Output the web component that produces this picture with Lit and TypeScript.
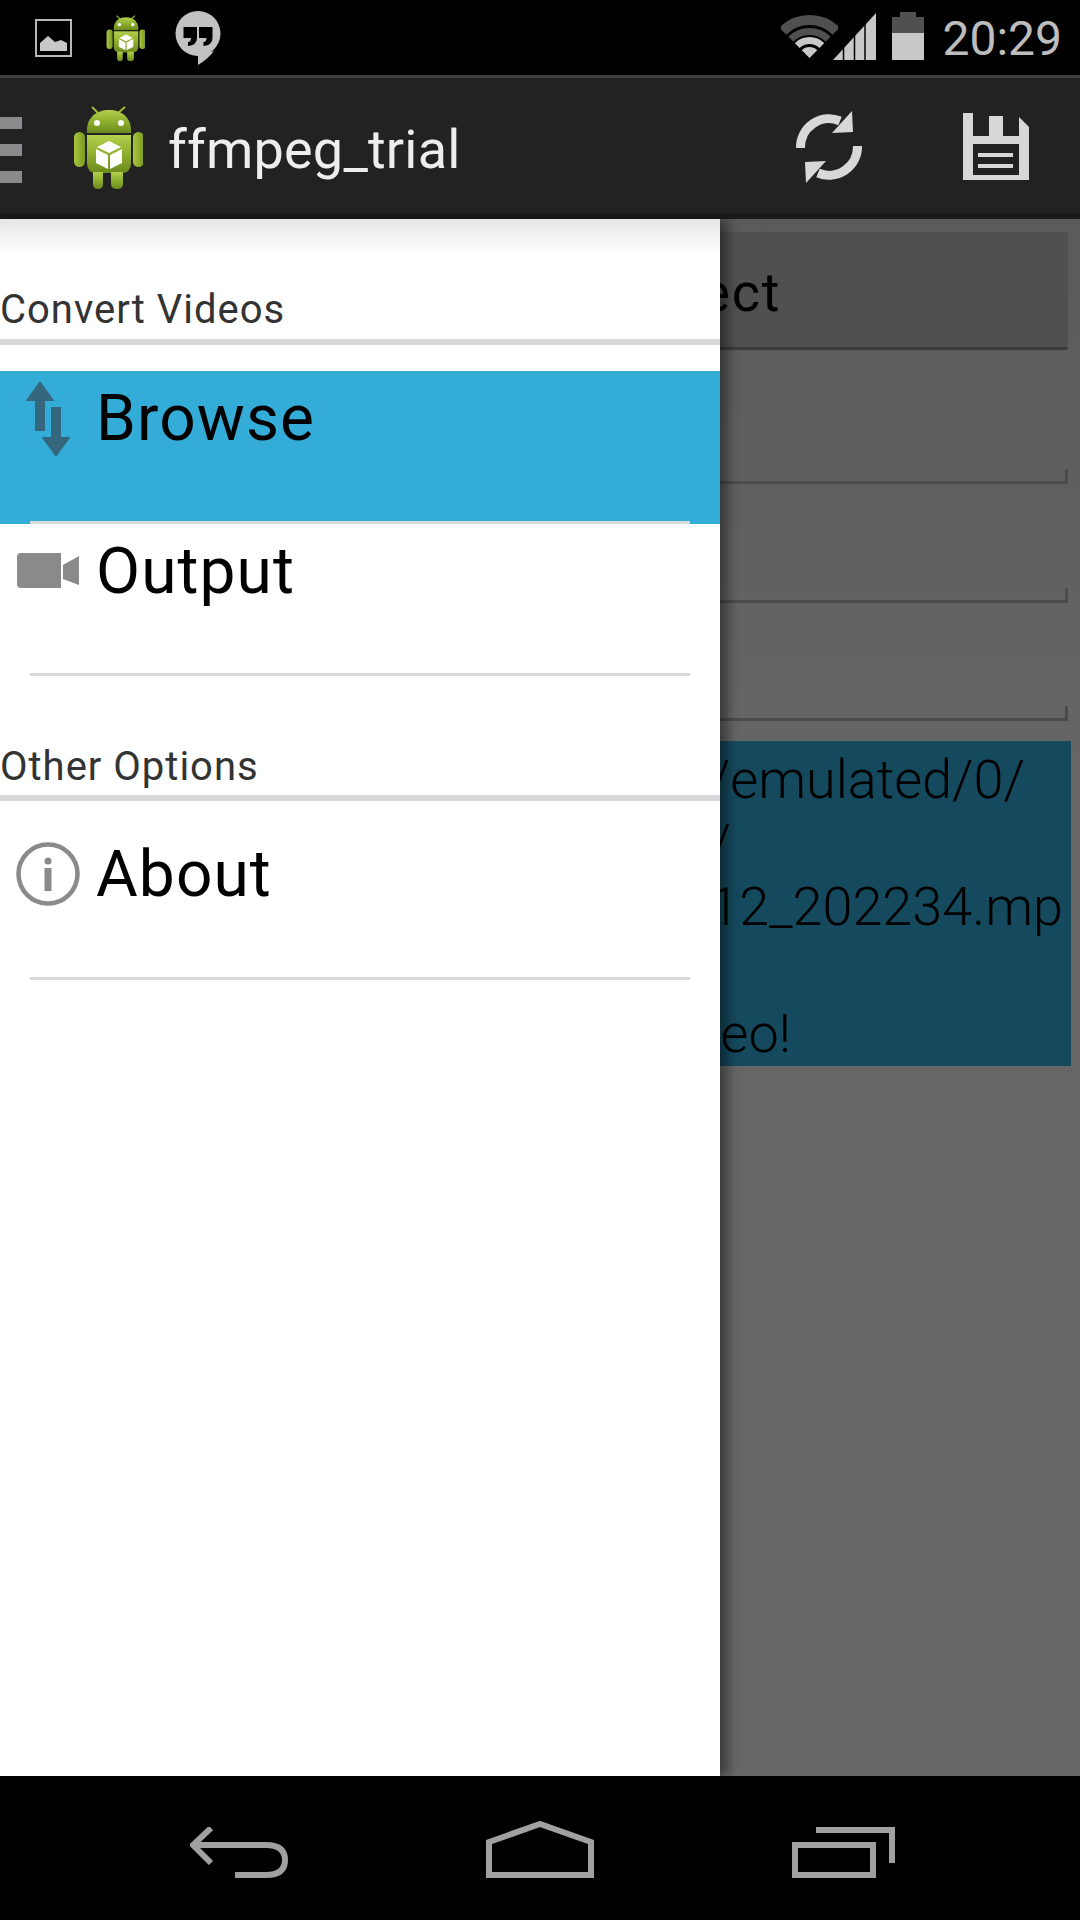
import { LitElement, css, html, svg } from 'lit'
import { customElement } from 'lit/decorators.js'

// right edge of each log line, measured from the right side of the box
const LOG_LINES = [
  { text: 'Input: /storage/emulated/0/', right: 46 },
  { text: 'DCIM/Camera/', right: 340 },
  { text: 'VID_20140212_202234.mp', right: 8 },
  { text: '4', right: 700 },
  { text: 'Converting your video!', right: 280 },
]

const androidIcon = (w: number, h: number) => html`
  <svg width=${w} height=${h} viewBox="0 0 70 84">
    <defs>
      <linearGradient id="grn" x1="0" y1="0" x2="0" y2="1">
        <stop offset="0" stop-color="#b4cf4e" />
        <stop offset="0.45" stop-color="#92b231" />
        <stop offset="1" stop-color="#6b8a1f" />
      </linearGradient>
      <linearGradient id="arm" x1="0" y1="0" x2="1" y2="0">
        <stop offset="0" stop-color="#a9c63f" />
        <stop offset="1" stop-color="#79981f" />
      </linearGradient>
    </defs>
    <path d="M25 7 19 1M45 7 52 1" stroke="#9dbb35" stroke-width="2" fill="none" />
    <path d="M14 27V24C14 12 23 4 36 4S58 12 58 24V27Z" fill="url(#grn)" />
    <circle cx="24" cy="17" r="3" fill="#fff" />
    <circle cx="48" cy="17" r="3" fill="#fff" />
    <path d="M14 29H58V57Q58 67 48 67H24Q14 67 14 57Z" fill="url(#grn)" />
    <rect x="1" y="26" width="11" height="35" rx="5.5" fill="url(#arm)" />
    <rect x="60" y="26" width="11" height="35" rx="5.5" fill="url(#arm)" />
    <path d="M20 66H30V78Q30 83 25 83T20 78ZM38 66H50V78Q50 83 44 83T38 78Z" fill="url(#grn)" />
    <path d="M36 35 48 41 36 47 24 41Z" fill="#fff" />
    <path d="M23 43 35 49V63L23 57ZM49 43 37 49V63L49 57Z" fill="#fff" />
  </svg>
`

const wifiIcon = svg`
  <defs><clipPath id="fan"><polygon points="28.5,43 -14,0 71,0" /></clipPath></defs>
  <g clip-path="url(#fan)" fill="none">
    <circle cx="28.5" cy="43" r="38" stroke="#505050" stroke-width="10" />
    <circle cx="28.5" cy="43" r="26.5" stroke="#505050" stroke-width="7" />
    <circle cx="28.5" cy="43" r="17.5" stroke="#c8c8c8" stroke-width="7" />
    <circle cx="28.5" cy="43" r="5.5" stroke="#c8c8c8" stroke-width="11" />
  </g>
`

@customElement('app-root')
export class AppRoot extends LitElement {
  static styles = css`
    :host {
      display: block;
      width: 1080px;
      height: 1920px;
      overflow: hidden;
      font-family: Roboto, sans-serif;
    }
    svg {
      display: block;
      flex: none;
    }
    .screen {
      height: 100%;
      display: flex;
      flex-direction: column;
    }

    .status-bar {
      height: 75px;
      background: #000;
      display: flex;
      align-items: flex-start;
      flex: none;
    }
    .status-bar .pic {
      margin: 19px 0 0 35px;
    }
    .status-bar .bot {
      margin: 15px 0 0 34px;
    }
    .status-bar .chat {
      margin: 11px 0 0 30px;
    }
    .status-bar .wifi {
      margin: 15px 0 0 auto;
    }
    .status-bar .signal {
      margin: 13px 0 0 -5px;
    }
    .status-bar .battery {
      margin: 12px 0 0 16px;
    }
    .clock {
      margin: 11px 18px 0 18px;
      font-size: 48px;
      line-height: 56px;
      color: #bdbdbd;
    }

    .action-bar {
      height: 135px;
      border-top: 3px solid #3d3d3d;
      border-bottom: 6px solid #1b1b1b;
      background: #222;
      display: flex;
      align-items: flex-start;
      flex: none;
    }
    .burger {
      width: 22px;
      margin-top: 39px;
      display: flex;
      flex-direction: column;
      gap: 15px;
    }
    .burger i {
      display: block;
      height: 12px;
      background: #8a8a8c;
    }
    .action-bar .logo {
      margin: 28px 0 0 51px;
    }
    .title {
      margin: 40px 0 0 25px;
      font-size: 54px;
      line-height: 63px;
      letter-spacing: 0.2px;
      color: #eee;
    }
    .action-bar .refresh {
      margin: 29px 0 0 auto;
    }
    .action-bar .save {
      margin: 35px 51px 0 98px;
    }

    .content {
      position: relative;
      flex: 1;
      min-height: 0;
      background: linear-gradient(#5a5a5a, #606060 300px, #666 560px);
    }
    .underlay {
      padding: 13px 0 0;
    }
    .button {
      height: 118px;
      margin-right: 12px;
      box-sizing: border-box;
      background: #505050;
      border-bottom: 3px solid #3b3b3b;
      border-radius: 3px;
      text-align: center;
      font-size: 54px;
      line-height: 122px;
      letter-spacing: 1.8px;
      color: #000;
      white-space: nowrap;
      overflow: hidden;
    }
    .field {
      height: 118.5px;
      margin-right: 12px;
      display: flex;
      align-items: flex-end;
    }
    .field.first {
      height: 134px;
    }
    .field i {
      display: block;
      width: 100%;
      height: 12px;
      border-right: 3px solid #4b4b4b;
      border-bottom: 3px solid #4b4b4b;
    }
    .log {
      height: 325px;
      margin: 20px 9px 0;
      padding-top: 7px;
      box-sizing: border-box;
      background: #15495d;
      font-size: 54px;
      line-height: 63.5px;
      font-weight: 300;
      color: #000;
      white-space: nowrap;
      overflow: hidden;
    }
    .log div {
      text-align: right;
    }

    .drawer {
      position: absolute;
      inset: 0 auto 0 0;
      width: 720px;
      background: linear-gradient(#e6e6e6, #fff 36px);
      box-shadow: 8px 0 10px rgba(0, 0, 0, 0.4);
    }
    .section {
      padding-top: 67px;
      height: 52px;
      border-bottom: 6px solid #d8d8da;
      font-size: 40px;
      line-height: 47px;
      letter-spacing: 1px;
      color: #333;
      white-space: nowrap;
    }
    .section:first-child {
      height: 53px;
    }
    .list {
      margin: 26px 0 0;
      padding: 0;
      list-style: none;
    }
    .item {
      height: 152.5px;
      display: flex;
      flex-direction: column;
    }
    .item.on {
      background: #33acd8;
    }
    .row {
      flex: 1;
      display: flex;
      align-items: flex-start;
    }
    .label {
      padding-top: 10px;
      font-size: 64px;
      line-height: 75px;
      letter-spacing: 1.1px;
      color: #000;
    }
    .divider {
      height: 3px;
      margin: 0 30px;
      background: #d8d8d8;
    }

    .nav-bar {
      height: 144px;
      flex: none;
      background: #000;
      display: flex;
      align-items: flex-start;
      padding-left: 190px;
    }
    .nav-bar .back {
      margin-top: 51px;
    }
    .nav-bar .home {
      margin: 45px 0 0 197px;
    }
    .nav-bar .recents {
      margin: 51px 0 0 198px;
    }
  `

  private renderItem(label: string, icon: unknown, selected = false) {
    return html`
      <li class="item ${selected ? 'on' : ''}">
        <div class="row">
          ${icon}
          <span class="label">${label}</span>
        </div>
        <div class="divider"></div>
      </li>
    `
  }

  render() {
    const browseIcon = html`
      <svg width="96" height="100" viewBox="0 0 96 100">
        <path d="M40 10 54.500 30H45V60H35V30H25.500Z M51 36H61V66H70.500L56 86 41.500 66H51Z" fill="#34667d" />
      </svg>
    `
    const videoIcon = html`
      <svg width="96" height="100" viewBox="0 0 96 100">
        <path d="M21 29H61V64H21Q17 64 17 60V33Q17 29 21 29ZM63 41 79 32V61L63 55Z" fill="#8a8a8a" />
      </svg>
    `
    const infoIcon = html`
      <svg width="96" height="100" viewBox="0 0 96 100">
        <circle cx="48" cy="47" r="29.500" fill="none" stroke="#8a8a8a" stroke-width="4.500" />
        <circle cx="48" cy="34" r="3.500" fill="#8a8a8a" />
        <rect x="44.500" y="41" width="7" height="23" fill="#8a8a8a" />
      </svg>
    `

    return html`
      <div class="screen">
        <div class="status-bar">
          <svg class="pic" width="37" height="38" viewBox="0 0 37 38">
            <rect x="1" y="1" width="35" height="36" fill="none" stroke="#b8b8b8" stroke-width="2" />
            <path d="M5 32V24L13 17 20 23 26 21 32 24V32Z" fill="#c8c8c8" />
          </svg>
          <div class="bot">${androidIcon(39, 47)}</div>
          <svg class="chat" width="46" height="55" viewBox="0 0 46 55">
            <path d="M23 0A22.500 22.500 0 0 1 23 45L23 54V45A22.500 22.500 0 0 1 23 0Z" fill="#c2c2c2" />
            <path d="M23 54V44L39 40Q33 48 23 54Z" fill="#c2c2c2" />
            <path d="M8.500 16H22V27Q22 34 13 35V31Q16 31 16 27H8.500ZM24 16H37.500V27Q37.500 34 28.500 35V31Q31.500 31 31.500 27H24Z" fill="#000" />
          </svg>
          <svg class="wifi" width="57" height="43" viewBox="0 0 57 43">${wifiIcon}</svg>
          <svg class="signal" width="43" height="47" viewBox="0 0 43 47">
            <path d="M0 47 43 0V47Z" fill="#c8c8c8" />
            <path d="M10.500 0V47M21.500 0V47M32 0V47" stroke="#000" stroke-width="1.500" />
          </svg>
          <svg class="battery" width="32" height="48" viewBox="0 0 32 48">
            <path d="M8 0H24V5H32V21H0V5H8Z" fill="#505050" />
            <rect y="21" width="32" height="27" fill="#c8c8c8" />
          </svg>
          <span class="clock">20:29</span>
        </div>

        <div class="action-bar">
          <div class="burger"><i></i><i></i><i></i></div>
          <div class="logo">${androidIcon(70, 84)}</div>
          <span class="title">ffmpeg_trial</span>
          <svg class="refresh" width="72" height="80" viewBox="0 0 72 80">
            <g fill="#d8d8d8">
              <path d="M7.500 41A28.500 28.500 0 0 1 47 14" fill="none" stroke="#d8d8d8" stroke-width="9" />
              <path d="M59 4 60 25 39 26Z" />
            </g>
            <g transform="rotate(180 36 40)" fill="#d8d8d8">
              <path d="M7.500 41A28.500 28.500 0 0 1 47 14" fill="none" stroke="#d8d8d8" stroke-width="9" />
              <path d="M59 4 60 25 39 26Z" />
            </g>
          </svg>
          <svg class="save" width="66" height="67" viewBox="0 0 66 67">
            <path d="M0 0H52L66 14V67H0Z" fill="#d8d8d8" />
            <rect x="10" y="0" width="46" height="23" fill="#222" />
            <rect x="26" y="3" width="14" height="20" fill="#d8d8d8" />
            <rect x="10" y="31" width="46" height="31" fill="#222" />
            <rect x="15" y="40" width="35" height="4" fill="#d8d8d8" />
            <rect x="15" y="51" width="35" height="4" fill="#d8d8d8" />
          </svg>
        </div>

        <div class="content">
          <div class="underlay">
            <div class="button">Click here to Select</div>
            <div class="field first"><i></i></div>
            <div class="field"><i></i></div>
            <div class="field"><i></i></div>
            <div class="log">
              ${LOG_LINES.map((l) => html`<div style="padding-right:${l.right}px">${l.text}</div>`)}
            </div>
          </div>
          <nav class="drawer">
            <div class="section">Convert Videos</div>
            <ul class="list">
              ${this.renderItem('Browse', browseIcon, true)}
              ${this.renderItem('Output', videoIcon)}
            </ul>
            <div class="section">Other Options</div>
            <ul class="list">
              ${this.renderItem('About', infoIcon)}
            </ul>
          </nav>
        </div>

        <div class="nav-bar">
          <svg class="back" width="99" height="51" viewBox="0 0 99 51">
            <path d="M21 1 3 18 21 36M3 18H76Q95 18 95 33T76 48H45" fill="none" stroke="#a0a0a0" stroke-width="6" />
          </svg>
          <svg class="home" width="108" height="57" viewBox="0 0 108 57">
            <path d="M3 54V21L54 3 105 21V54Z" fill="none" stroke="#a0a0a0" stroke-width="6" />
          </svg>
          <svg class="recents" width="103" height="51" viewBox="0 0 103 51">
            <rect x="3" y="18" width="78" height="30" fill="none" stroke="#a0a0a0" stroke-width="6" />
            <path d="M24 3H100V36" fill="none" stroke="#a0a0a0" stroke-width="6" />
          </svg>
        </div>
      </div>
    `
  }
}
